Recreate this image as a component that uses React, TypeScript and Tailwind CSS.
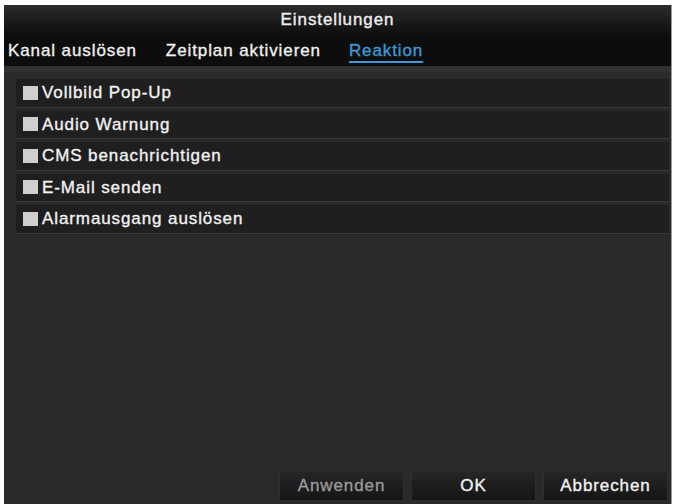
import React from 'react';

const tabs = [
  { label: 'Kanal auslösen', active: false },
  { label: 'Zeitplan aktivieren', active: false },
  { label: 'Reaktion', active: true },
];

const actions = [
  'Vollbild Pop-Up',
  'Audio Warnung',
  'CMS benachrichtigen',
  'E-Mail senden',
  'Alarmausgang auslösen',
];

const DialogButton: React.FC<{ label: string; disabled?: boolean }> = ({ label, disabled }) => (
  <button
    className={
      disabled
        ? 'w-[125px] h-[31px] border border-[#2e2e2e] bg-gradient-to-b from-[#262626] to-[#161616] text-[#9a9a9a] text-[17px] tracking-[0.9px] [-webkit-text-stroke:0.35px]'
        : 'w-[125px] h-[31px] border border-[#2e2e2e] bg-gradient-to-b from-[#262626] to-[#161616] text-[#f2f2f2] text-[17px] tracking-[0.9px] [-webkit-text-stroke:0.35px]'
    }
  >
    {label}
  </button>
);

export default function App() {
  return (
    <div className="w-[676px] h-[504px] bg-white pt-[5px] pl-[4px] pr-[4px] font-['Liberation_Sans',Arial,sans-serif]">
      <div className="h-[499px] flex flex-col bg-[#2a2a2a] border-r border-[#9a9a9a]">
        {/* title */}
        <div className="h-[30px] flex items-center justify-center bg-gradient-to-b from-[#2c2c2c] to-[#0e0e0e] text-[#f0f0f0] text-[17px] tracking-[0.9px] [-webkit-text-stroke:0.35px]">
          Einstellungen
        </div>

        {/* tabs */}
        <div className="h-[37px] flex items-center gap-[29px] pl-[4px] bg-[#0d0d0d] border-b-[6px] border-[#313131]">
          {tabs.map((tab) =>
            tab.active ? (
              <span
                key={tab.label}
                className="ml-[-1px] text-[17px] tracking-[0.9px] [-webkit-text-stroke:0.35px] text-[#3b9ad6] underline underline-offset-[5px] decoration-[2px]"
              >
                {tab.label}
              </span>
            ) : (
              <span key={tab.label} className="text-[17px] tracking-[0.9px] [-webkit-text-stroke:0.35px] text-[#f0f0f0]">
                {tab.label}
              </span>
            )
          )}
        </div>

        {/* checkbox rows */}
        <div className="flex flex-col gap-[3px] pl-[12px] pr-[2px] pt-[7px]">
          {actions.map((item) => (
            <div
              key={item}
              className="h-[28.5px] flex items-center gap-[4px] pl-[7px] bg-[#1f1f1f] border-b border-[#393939]"
            >
              <span className="w-[15px] h-[14px] bg-[#cfcfcf]" />
              <span className="text-[17px] tracking-[0.9px] [-webkit-text-stroke:0.35px] text-[#f2f2f2]">{item}</span>
            </div>
          ))}
        </div>

        <div className="flex-1" />

        {/* buttons */}
        <div className="flex justify-end gap-[7px] pr-[3px] pb-[3px]">
          <DialogButton label="Anwenden" disabled />
          <DialogButton label="OK" />
          <DialogButton label="Abbrechen" />
        </div>
      </div>
    </div>
  );
}
